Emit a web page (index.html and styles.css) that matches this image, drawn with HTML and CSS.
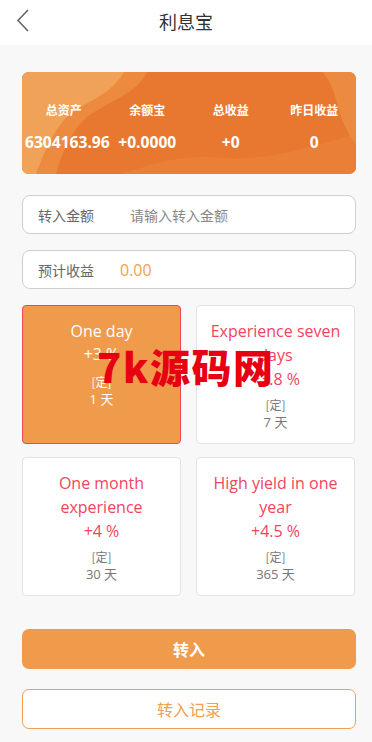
FILE: index.html
```html
<!DOCTYPE html>
<html lang="zh-CN">
<head>
<meta charset="utf-8">
<title>利息宝</title>
<link rel="stylesheet" href="styles.css">
</head>
<body>
<header class="topbar">
  <svg class="back" width="14" height="24" viewBox="0 0 14 24"><path d="M12 1 L2 11.5 L12 22" fill="none" stroke="#666" stroke-width="1.6"/></svg>
  <h1 class="title">利息宝</h1>
</header>
<main class="page">
  <section class="summary">
    <svg class="summary-bg" viewBox="0 0 334 102" preserveAspectRatio="none">
      <rect width="334" height="102" fill="#e8782f"/>
      <path d="M0,0 H125 C115,22 85,30 65,45 C50,58 40,80 34,102 H0 Z" fill="#ec8a40"/>
      <path d="M0,0 H102 C92,18 72,28 56,36 C36,48 24,75 14,102 H0 Z" fill="#f0a259"/>
      <path d="M100,102 C130,92 160,82 200,86 C240,90 285,76 334,62 V102 Z" fill="#ea8038"/>
      <path d="M300,0 C318,18 312,45 334,72 V0 Z" fill="#ec8a41"/>
    </svg>
    <div class="stats">
      <div class="stat"><div class="stat-label">总资产</div><div class="stat-value">6304163.96</div></div>
      <div class="stat"><div class="stat-label">余额宝</div><div class="stat-value">+0.0000</div></div>
      <div class="stat"><div class="stat-label">总收益</div><div class="stat-value">+0</div></div>
      <div class="stat"><div class="stat-label">昨日收益</div><div class="stat-value">0</div></div>
    </div>
  </section>

  <div class="field">
    <span class="field-label">转入金额</span>
    <span class="field-placeholder">请输入转入金额</span>
  </div>
  <div class="field field-second">
    <span class="field-label">预计收益</span>
    <span class="field-value">0.00</span>
  </div>

  <div class="plans">
    <div class="plan plan-active">
      <div class="plan-name">One day</div>
      <div class="plan-rate">+3 %</div>
      <div class="plan-type">[定]</div>
      <div class="plan-days">1 天</div>
    </div>
    <div class="plan">
      <div class="plan-name">Experience seven days</div>
      <div class="plan-rate">+3.8 %</div>
      <div class="plan-type">[定]</div>
      <div class="plan-days">7 天</div>
    </div>
    <div class="plan">
      <div class="plan-name">One month experience</div>
      <div class="plan-rate">+4 %</div>
      <div class="plan-type">[定]</div>
      <div class="plan-days">30 天</div>
    </div>
    <div class="plan">
      <div class="plan-name">High yield in one year</div>
      <div class="plan-rate">+4.5 %</div>
      <div class="plan-type">[定]</div>
      <div class="plan-days">365 天</div>
    </div>
  </div>

  <button class="btn btn-primary">转入</button>
  <button class="btn btn-outline">转入记录</button>
</main>
<div class="watermark">7k源码网</div>
</body>
</html>
```

FILE: styles.css
```css
* { box-sizing: border-box; }
html, body {
  margin: 0;
  padding: 0;
  background: #f8f8f8;
  font-family: "Open Sans", "Noto Sans CJK SC", sans-serif;
}
body { position: relative; width: 372px; min-height: 742px; }

.topbar {
  height: 45px;
  background: #fff;
  display: flex;
  align-items: center;
  justify-content: center;
  position: relative;
}
.back {
  position: absolute;
  left: 16px;
  top: 9px;
}
.title {
  margin: 0;
  font-family: "Noto Sans CJK SC", sans-serif;
  font-weight: 400;
  font-size: 18px;
  color: #333;
  line-height: 24px;
  margin-top: -3px;
}

.page {
  padding: 27px 16px 0 22px;
  display: flex;
  flex-direction: column;
}

.summary {
  position: relative;
  height: 102px;
  border-radius: 7px;
  overflow: hidden;
}
.summary-bg {
  position: absolute;
  left: 0; top: 0;
  width: 100%; height: 100%;
}
.stats {
  position: relative;
  display: grid;
  grid-template-columns: repeat(4, 1fr);
  padding-top: 30px;
  color: #fff;
  text-align: center;
}
.stat { min-width: 0; }
.stat-label {
  font-family: "Noto Sans CJK SC", sans-serif;
  font-size: 12px;
  font-weight: 700;
  line-height: 16px;
}
.stat-value {
  margin-top: 13px;
  font-size: 15.6px;
  font-weight: 700;
  line-height: 22px;
  white-space: nowrap;
}
.stat:first-child .stat-value { padding-left: 3px; }

.field {
  margin-top: 21px;
  height: 39px;
  background: #fff;
  border: 1px solid #cfcfcf;
  border-radius: 8px;
  display: flex;
  align-items: center;
  padding-left: 15px;
  font-family: "Noto Sans CJK SC", sans-serif;
  font-size: 14px;
}
.field-second { margin-top: 16px; }
.field-label { color: #666; width: 92px; }
.field-placeholder { color: #888; }
.field-second .field-label { width: 82px; }
.field-value {
  color: #f0a050;
  font-family: "Open Sans", sans-serif;
  font-size: 16px;
}

.plans {
  margin-top: 16px;
  display: grid;
  grid-template-columns: 159px 159px;
  grid-auto-rows: 139px;
  column-gap: 15px;
  row-gap: 13px;
}
.plan {
  background: #fff;
  border: 1px solid #e3e3e3;
  border-radius: 4px;
  padding: 13px 8px 0;
  text-align: center;
}
.plan-name, .plan-rate {
  font-size: 16px;
  line-height: 24px;
  color: #f2455a;
}
.plan-type {
  margin-top: 5px;
  font-family: "Noto Sans CJK SC", sans-serif;
  font-size: 12px;
  line-height: 17px;
  color: #777;
}
.plan-days {
  font-family: "Open Sans", "Noto Sans CJK SC", sans-serif;
  font-size: 13px;
  line-height: 18px;
  color: #777;
}
.plan-active {
  background: #f09a4b;
  border-color: #f2455a;
}
.plan-active .plan-name,
.plan-active .plan-rate { color: #fff; }
.plan-active .plan-rate { line-height: 22px; }
.plan-active .plan-type { margin-top: 8px; }
.plan-active .plan-type,
.plan-active .plan-days { color: #fff; }

.btn {
  display: block;
  width: 100%;
  height: 40px;
  border-radius: 7px;
  font-family: "Noto Sans CJK SC", sans-serif;
  font-size: 16px;
  cursor: pointer;
}
.btn-primary {
  margin-top: 33px;
  background: #f09a4b;
  border: none;
  color: #fff;
  font-weight: 700;
}
.btn-outline {
  margin-top: 20px;
  background: #fff;
  border: 1px solid #f0a050;
  color: #f0a050;
}

.watermark {
  position: absolute;
  left: 97px;
  top: 344px;
  font-family: "Noto Sans CJK SC", sans-serif;
  font-weight: 900;
  font-size: 40px;
  letter-spacing: 1.6px;
  line-height: 44px;
  color: #e60012;
  white-space: nowrap;
}
```
